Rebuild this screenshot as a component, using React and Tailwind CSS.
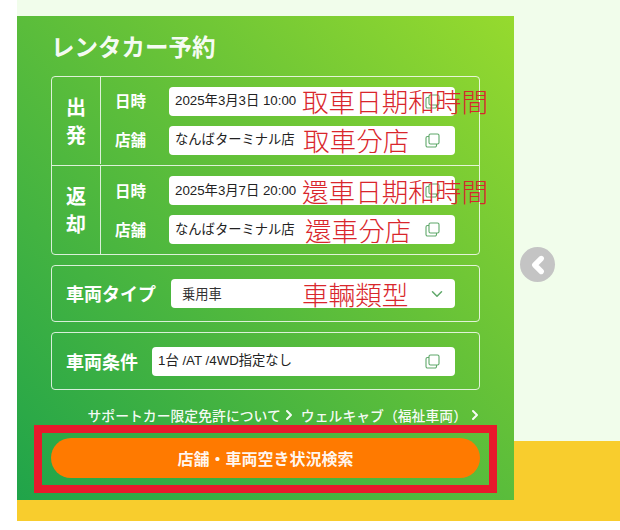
import { ChevronDown, ChevronRight } from 'lucide-react'

const JP = { fontFamily: '"Noto Sans CJK JP", sans-serif' }

function CopyIcon() {
  return (
    <svg width="15" height="15" viewBox="0 0 15 15" fill="none" stroke="#5fa86a" strokeWidth="1.1" className="shrink-0">
      <rect x="4" y="1" width="10" height="10" rx="1.5" />
      <path d="M4 3.5H2.5A1.5 1.5 0 0 0 1 5v7.5A1.5 1.5 0 0 0 2.5 14H10a1.5 1.5 0 0 0 1.5-1.5V11" />
    </svg>
  )
}

function Field({ text, note, noteClass, className = '' }) {
  return (
    <div className={`relative flex h-[29px] items-center justify-between rounded-[4px] bg-white pl-1.5 pr-[15px] text-[13.3px] text-[#222] ${className}`}>
      <span className="font-['Liberation_Sans','Noto_Sans_CJK_JP',sans-serif] whitespace-nowrap">{text}</span>
      <CopyIcon />
      {note && <span className={`absolute top-1/2 -translate-y-1/2 whitespace-nowrap font-['Noto_Sans_CJK_TC',sans-serif] text-[26.6px] font-light leading-none text-[#d9262c] ${noteClass}`}>{note}</span>}
    </div>
  )
}

function Row({ label, ...rest }) {
  return (
    <div className="flex items-center">
      <span className="w-[68px] pl-[14px] text-[15.5px] font-bold text-white">{label}</span>
      <Field className="w-[286px]" {...rest} />
    </div>
  )
}

function Group({ title, rows, className = '' }) {
  return (
    <div className={`flex ${className}`}>
      <div className="flex w-[49px] items-center justify-center border-r border-white/80 text-center text-[20px] font-bold leading-[28px] text-white">
        {title}
      </div>
      <div className="flex flex-1 flex-col justify-center gap-[10px]">
        {rows.map((r) => <Row key={r.label} {...r} />)}
      </div>
    </div>
  )
}

export default function App() {
  return (
    <div className="h-[530px] w-[620px] overflow-hidden bg-white pl-[17px]" style={JP}>
      <div className="flex h-[521px] items-start bg-[linear-gradient(#f1fdeb_441px,#f8cd2d_441px)] pt-4">
        <div className="h-[484px] w-[497px] bg-[linear-gradient(to_top_right,#20a44a,#66c238_60%,#96da2e)] pl-[34px] pr-[34px]">
          <h1 className="mt-[16px] text-[23.5px] font-bold leading-[29px] text-white/95">レンタカー予約</h1>

          <div className="mt-[15px] rounded-[4px] border border-white/80">
            <Group
              title={<>出<br />発</>}
              className="h-[89px] border-b border-white/80 pb-px"
              rows={[
                { label: '日時', text: '2025年3月3日 10:00', note: '取車日期和時間', noteClass: 'left-[133px]' },
                { label: '店舗', text: 'なんばターミナル店', note: '取車分店', noteClass: 'left-[134px]' },
              ]}
            />
            <Group
              title={<>返<br />却</>}
              className="h-[88px]"
              rows={[
                { label: '日時', text: '2025年3月7日 20:00', note: '還車日期和時間', noteClass: 'left-[133px]' },
                { label: '店舗', text: 'なんばターミナル店', note: '還車分店', noteClass: 'left-[136px]' },
              ]}
            />
          </div>

          <div className="mt-[10px] flex h-[57px] items-center rounded-[4px] border border-white/80 pl-[14px]">
            <span className="w-[105px] text-[18px] font-bold whitespace-nowrap text-white">車両タイプ</span>
            <div className="relative flex h-[29px] w-[284px] items-center justify-between rounded-[4px] bg-white pl-[11px] pr-[9px] text-[13.3px] text-[#333]">
              <span>乗用車</span>
              <ChevronDown size={18} color="#5fa86a" />
              <span className="absolute left-[131px] top-1/2 -translate-y-1/2 font-['Noto_Sans_CJK_TC',sans-serif] text-[26.6px] font-light leading-none whitespace-nowrap text-[#d9262c]">車輛類型</span>
            </div>
          </div>

          <div className="mt-[10px] flex h-[58px] items-center rounded-[4px] border border-white/80 pl-[14px]">
            <span className="w-[86px] text-[18px] font-bold whitespace-nowrap text-white">車両条件</span>
            <Field className="w-[303px]" text="1台 /AT /4WD指定なし" />
          </div>

          <div className="mt-[16px] -mr-[3px] flex items-center justify-end text-[13.85px] leading-[18px] font-medium text-white/95">
            <span>サポートカー限定免許について</span>
            <ChevronRight size={16} strokeWidth={3} className="mr-[4px]" />
            <span>ウェルキャブ（福祉車両）</span>
            <ChevronRight size={16} strokeWidth={3} />
          </div>

          <div className="-mx-[17px] mt-[1px] h-[68px] border-8 border-[#e8192c] px-[9px] pt-[5px]">
            <button className="h-10 w-full rounded-full bg-[#ff7a00] text-[16px] font-bold text-white/95">店舗・車両空き状況検索</button>
          </div>
        </div>

        <div className="ml-[6px] mt-[231px] flex h-[35px] w-[35px] items-center justify-center rounded-full bg-[#c4c4c4]">
          <ChevronRight size={26} strokeWidth={5} color="white" className="rotate-180" />
        </div>
      </div>
    </div>
  )
}
